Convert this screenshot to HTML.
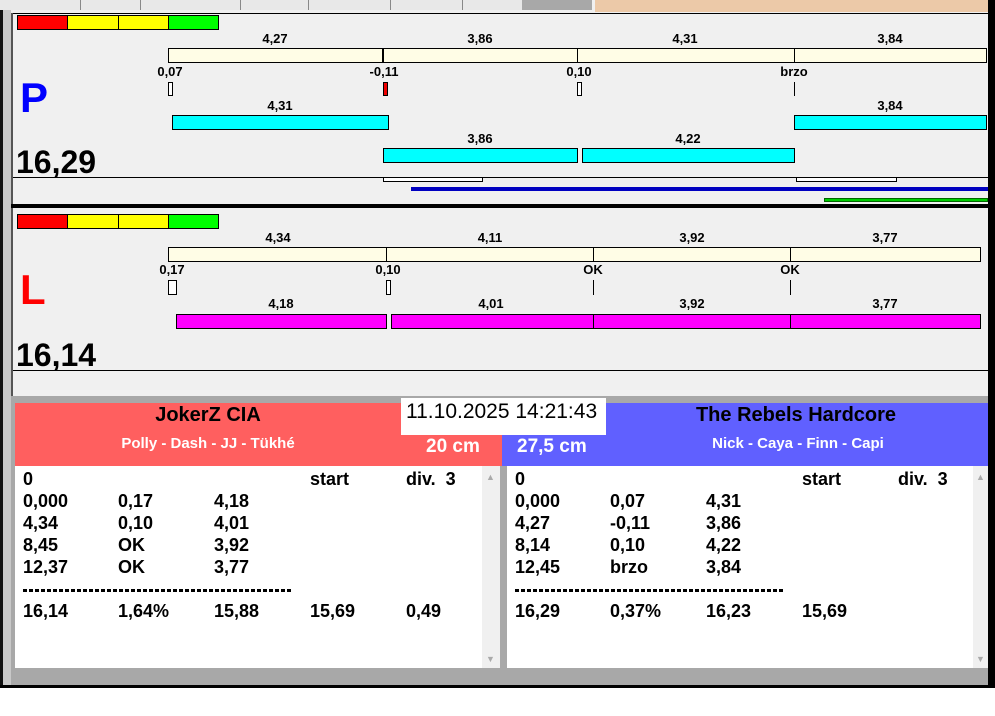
<!DOCTYPE html><html><head><style>
*{margin:0;padding:0;box-sizing:border-box}
body{width:995px;height:716px;background:#fff;position:relative;overflow:hidden;font-family:"Liberation Sans",Arial,sans-serif}
div,span{position:absolute}
.b{font-weight:bold}
.l{font-size:13px;font-weight:bold;transform:translateX(-50%);white-space:nowrap}
.bx{border:1px solid #000}
.t{font-size:18px;font-weight:bold;white-space:nowrap}
.d{height:3px;background:repeating-linear-gradient(90deg,#000 0 4px,transparent 4px 6px)}
</style></head><body>
<div style="left:0;top:0;width:992px;height:688px;background:#f0f0f0"></div>
<div style="left:0;top:0;width:3px;height:688px;background:#111"></div>
<div style="left:3px;top:0;width:8px;height:688px;background:#c8c8c8"></div>
<div style="left:0;top:0;width:522px;height:10px;background:#e8e8e8"></div>
<div style="left:80px;top:0;width:1px;height:10px;background:#888"></div>
<div style="left:140px;top:0;width:1px;height:10px;background:#888"></div>
<div style="left:240px;top:0;width:1px;height:10px;background:#888"></div>
<div style="left:308px;top:0;width:1px;height:10px;background:#888"></div>
<div style="left:390px;top:0;width:1px;height:10px;background:#888"></div>
<div style="left:462px;top:0;width:1px;height:10px;background:#888"></div>
<div style="left:522px;top:0;width:70px;height:10px;background:#a8a8a8"></div>
<div style="left:595px;top:0;width:393px;height:12px;background:#ecc9a8"></div>
<div style="left:11px;top:13px;width:977px;height:1px;background:#000"></div>
<div style="left:11px;top:13px;width:2px;height:385px;background:#555"></div>
<div style="left:988px;top:0;width:7px;height:688px;background:#000"></div>
<!-- P panel -->
<div class="bx" style="left:17px;top:15px;width:51px;height:15px;background:#f00"></div>
<div class="bx" style="left:67px;top:15px;width:52px;height:15px;background:#ff0"></div>
<div class="bx" style="left:118px;top:15px;width:51px;height:15px;background:#ff0"></div>
<div class="bx" style="left:168px;top:15px;width:51px;height:15px;background:#0f0"></div>
<span class="l" style="left:275px;top:31px">4,27</span><span class="l" style="left:480px;top:31px">3,86</span><span class="l" style="left:685px;top:31px">4,31</span><span class="l" style="left:890px;top:31px">3,84</span>
<div class="bx" style="left:168px;top:48px;width:819px;height:15px;background:#fffde6"></div>
<div style="left:382px;top:48px;width:2px;height:15px;background:#000"></div>
<div style="left:577px;top:48px;width:1px;height:15px;background:#000"></div>
<div style="left:794px;top:48px;width:1px;height:15px;background:#000"></div>
<span class="l" style="left:170px;top:64px">0,07</span><span class="l" style="left:384px;top:64px">-0,11</span><span class="l" style="left:579px;top:64px">0,10</span><span class="l" style="left:794px;top:64px">brzo</span>
<div class="bx" style="left:168px;top:82px;width:5px;height:14px;background:#fff"></div>
<div class="bx" style="left:383px;top:82px;width:5px;height:14px;background:#e00"></div>
<div class="bx" style="left:577px;top:82px;width:5px;height:14px;background:#fff"></div>
<div style="left:794px;top:82px;width:1px;height:14px;background:#000"></div>
<span class="b" style="left:20px;top:74px;font-size:42px;color:#00f">P</span>
<span class="l" style="left:280px;top:98px">4,31</span><span class="l" style="left:890px;top:98px">3,84</span>
<div class="bx" style="left:172px;top:115px;width:217px;height:15px;background:#0ff"></div>
<div class="bx" style="left:794px;top:115px;width:193px;height:15px;background:#0ff"></div>
<span class="l" style="left:480px;top:131px">3,86</span><span class="l" style="left:688px;top:131px">4,22</span>
<div class="bx" style="left:383px;top:148px;width:195px;height:15px;background:#0ff"></div>
<div class="bx" style="left:582px;top:148px;width:213px;height:15px;background:#0ff"></div>
<span class="b" style="left:16px;top:144px;font-size:32px">16,29</span>
<div style="left:13px;top:177px;width:975px;height:1px;background:#000"></div>
<div class="bx" style="left:383px;top:177px;width:100px;height:5px;background:#fff"></div>
<div class="bx" style="left:796px;top:177px;width:101px;height:5px;background:#fff"></div>
<div style="left:411px;top:187px;width:577px;height:4px;background:#0000c0"></div>
<div style="left:824px;top:198px;width:164px;height:4px;background:#0c0;border:1px solid #060"></div>
<div style="left:11px;top:204px;width:977px;height:4px;background:#000"></div>
<!-- L panel -->
<div class="bx" style="left:17px;top:214px;width:51px;height:15px;background:#f00"></div>
<div class="bx" style="left:67px;top:214px;width:52px;height:15px;background:#ff0"></div>
<div class="bx" style="left:118px;top:214px;width:51px;height:15px;background:#ff0"></div>
<div class="bx" style="left:168px;top:214px;width:51px;height:15px;background:#0f0"></div>
<span class="l" style="left:278px;top:230px">4,34</span><span class="l" style="left:490px;top:230px">4,11</span><span class="l" style="left:692px;top:230px">3,92</span><span class="l" style="left:885px;top:230px">3,77</span>
<div class="bx" style="left:168px;top:247px;width:813px;height:15px;background:#fffde6"></div>
<div style="left:386px;top:247px;width:1px;height:15px;background:#000"></div>
<div style="left:593px;top:247px;width:1px;height:15px;background:#000"></div>
<div style="left:790px;top:247px;width:1px;height:15px;background:#000"></div>
<span class="l" style="left:172px;top:262px">0,17</span><span class="l" style="left:388px;top:262px">0,10</span><span class="l" style="left:593px;top:262px">OK</span><span class="l" style="left:790px;top:262px">OK</span>
<div class="bx" style="left:168px;top:280px;width:9px;height:15px;background:#fff"></div>
<div class="bx" style="left:386px;top:280px;width:5px;height:15px;background:#fff"></div>
<div style="left:593px;top:280px;width:1px;height:15px;background:#000"></div>
<div style="left:790px;top:280px;width:1px;height:15px;background:#000"></div>
<span class="b" style="left:20px;top:266px;font-size:42px;color:#f00">L</span>
<span class="l" style="left:281px;top:296px">4,18</span><span class="l" style="left:491px;top:296px">4,01</span><span class="l" style="left:692px;top:296px">3,92</span><span class="l" style="left:885px;top:296px">3,77</span>
<div class="bx" style="left:176px;top:314px;width:211px;height:15px;background:#f0f"></div>
<div class="bx" style="left:391px;top:314px;width:203px;height:15px;background:#f0f"></div>
<div class="bx" style="left:593px;top:314px;width:198px;height:15px;background:#f0f"></div>
<div class="bx" style="left:790px;top:314px;width:191px;height:15px;background:#f0f"></div>
<span class="b" style="left:16px;top:337px;font-size:32px">16,14</span>
<div style="left:13px;top:370px;width:975px;height:1px;background:#000"></div>
<!-- bottom -->
<div style="left:11px;top:396px;width:977px;height:290px;background:#a8a8a8"></div>
<div style="left:15px;top:403px;width:487px;height:63px;background:#ff5f5f"></div>
<div style="left:502px;top:403px;width:486px;height:63px;background:#6060ff"></div>
<span class="b" style="left:208px;top:404px;font-size:20px;transform:translateX(-50%);white-space:nowrap">JokerZ CIA</span>
<span class="b" style="left:208px;top:435px;font-size:15px;color:#fff;transform:translateX(-50%);white-space:nowrap">Polly - Dash - JJ - Tükhé</span>
<span class="b" style="left:796px;top:404px;font-size:20px;transform:translateX(-50%);white-space:nowrap">The Rebels Hardcore</span>
<span class="b" style="left:798px;top:435px;font-size:15px;color:#fff;transform:translateX(-50%);white-space:nowrap">Nick - Caya - Finn - Capi</span>
<span class="b" style="left:426px;top:436px;font-size:19px;color:#fff">20 cm</span>
<span class="b" style="left:517px;top:436px;font-size:19px;color:#fff">27,5 cm</span>
<div style="left:401px;top:398px;width:205px;height:37px;background:#fff"></div>
<span style="left:406px;top:400px;font-size:21px">11.10.2025 14:21:43</span>
<div style="left:15px;top:466px;width:467px;height:202px;background:#fff"></div>
<div style="left:482px;top:466px;width:18px;height:202px;background:#f0f0f0"></div>
<div style="left:507px;top:466px;width:466px;height:202px;background:#fff"></div>
<div style="left:973px;top:466px;width:15px;height:202px;background:#f0f0f0"></div>
<span style="left:486px;top:472px;font-size:9px;color:#aaa">▲</span><span style="left:486px;top:654px;font-size:9px;color:#aaa">▼</span>
<span style="left:976px;top:472px;font-size:9px;color:#aaa">▲</span><span style="left:976px;top:654px;font-size:9px;color:#aaa">▼</span>
<div style="left:0;top:685px;width:992px;height:3px;background:#000"></div>
<div style="left:0;top:688px;width:995px;height:28px;background:#fff"></div>
<!-- left list -->
<span class="t" style="left:23px;top:469px">0</span><span class="t" style="left:310px;top:469px">start</span><span class="t" style="left:406px;top:469px">div.&nbsp; 3</span>
<span class="t" style="left:23px;top:491px">0,000</span><span class="t" style="left:118px;top:491px">0,17</span><span class="t" style="left:214px;top:491px">4,18</span>
<span class="t" style="left:23px;top:513px">4,34</span><span class="t" style="left:118px;top:513px">0,10</span><span class="t" style="left:214px;top:513px">4,01</span>
<span class="t" style="left:23px;top:535px">8,45</span><span class="t" style="left:118px;top:535px">OK</span><span class="t" style="left:214px;top:535px">3,92</span>
<span class="t" style="left:23px;top:557px">12,37</span><span class="t" style="left:118px;top:557px">OK</span><span class="t" style="left:214px;top:557px">3,77</span>
<div class="d" style="left:23px;top:589px;width:269px"></div>
<span class="t" style="left:23px;top:601px">16,14</span><span class="t" style="left:118px;top:601px">1,64%</span><span class="t" style="left:214px;top:601px">15,88</span><span class="t" style="left:310px;top:601px">15,69</span><span class="t" style="left:406px;top:601px">0,49</span>
<!-- right list -->
<span class="t" style="left:515px;top:469px">0</span><span class="t" style="left:802px;top:469px">start</span><span class="t" style="left:898px;top:469px">div.&nbsp; 3</span>
<span class="t" style="left:515px;top:491px">0,000</span><span class="t" style="left:610px;top:491px">0,07</span><span class="t" style="left:706px;top:491px">4,31</span>
<span class="t" style="left:515px;top:513px">4,27</span><span class="t" style="left:610px;top:513px">-0,11</span><span class="t" style="left:706px;top:513px">3,86</span>
<span class="t" style="left:515px;top:535px">8,14</span><span class="t" style="left:610px;top:535px">0,10</span><span class="t" style="left:706px;top:535px">4,22</span>
<span class="t" style="left:515px;top:557px">12,45</span><span class="t" style="left:610px;top:557px">brzo</span><span class="t" style="left:706px;top:557px">3,84</span>
<div class="d" style="left:515px;top:589px;width:269px"></div>
<span class="t" style="left:515px;top:601px">16,29</span><span class="t" style="left:610px;top:601px">0,37%</span><span class="t" style="left:706px;top:601px">16,23</span><span class="t" style="left:802px;top:601px">15,69</span>
</body></html>
